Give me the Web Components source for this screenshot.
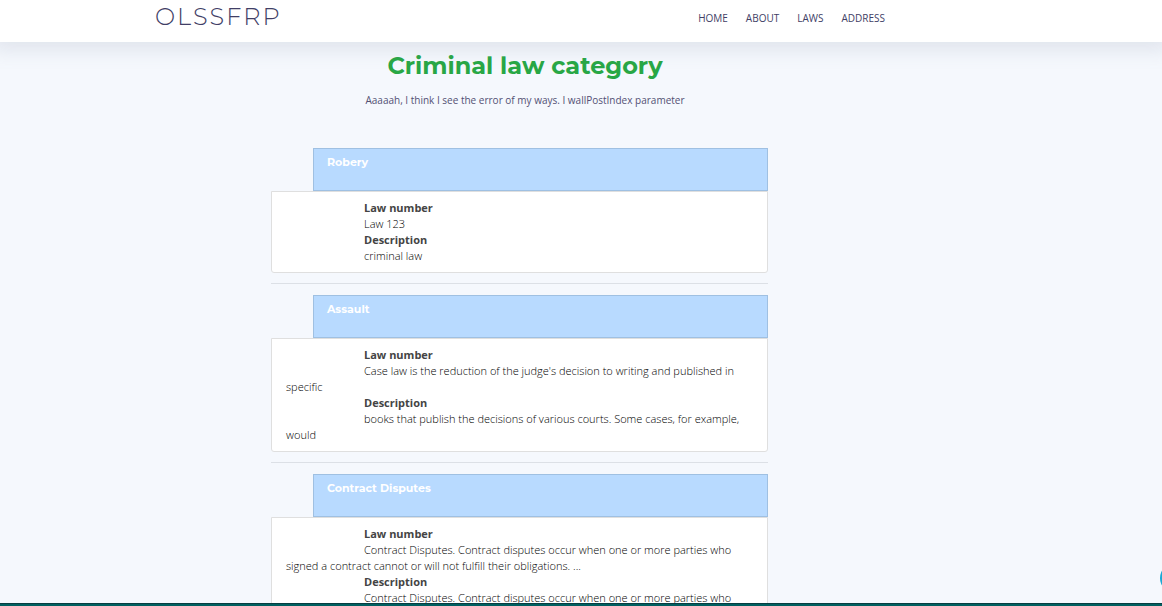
<!DOCTYPE html>
<html lang="en">
<head>
<meta charset="utf-8">
<title>Criminal law category</title>
<style>
  html, body { height: 100%; }
  body {
    margin: 0;
    overflow: hidden;
    background: #f5f8fd;
    color: #444;
    font: 11px/16px "Open Sans", sans-serif;
    --display: Montserrat, "Noto Sans", sans-serif;
    --gutter: 155px;
    --measure: 740px;
  }
</style>
</head>
<body>
<law-app></law-app>

<script>
const define = (name, html) => {
  const template = document.createElement('template');
  template.innerHTML = html;
  customElements.define(name, class extends HTMLElement {
    constructor() {
      super();
      this.attachShadow({ mode: 'open' }).append(template.content.cloneNode(true));
    }
  });
};

define('site-header', `
  <style>
    :host { display: block; position: relative; background: #fff; box-shadow: 0 0 20px 8px rgba(127, 137, 161, .18); }
    header { display: flex; align-items: flex-start; justify-content: space-between; box-sizing: border-box;
      height: 42px; max-width: var(--measure); margin-left: var(--gutter); padding-right: 10px; }
    .logo { color: #413e66; font: 300 24px/34px Montserrat, Lato, sans-serif; letter-spacing: 2px; text-decoration: none; }
    nav { display: flex; gap: 18px; padding-top: 10px; }
  </style>
  <header>
    <a class="logo" href="#home">OLSSFRP</a>
    <nav><slot></slot></nav>
  </header>
`);

customElements.define('nav-link', class extends HTMLElement {
  constructor() {
    super();
    this.attachShadow({ mode: 'open' }).innerHTML = `
      <style>
        :host { display: block; }
        a { color: #413e66; font-size: 10px; line-height: 16px; text-decoration: none; text-transform: uppercase; }
      </style>
      <a><slot></slot></a>`;
  }
  connectedCallback() {
    this.shadowRoot.querySelector('a').href = this.getAttribute('to');
  }
});

define('page-intro', `
  <style>
    :host { display: block; text-align: center; }
    h1 { margin: 0; padding: 8px 0 10px; color: #28a745; font: 700 24px/32px var(--display); }
    p { margin: 0; color: #535074; font-size: 10px; line-height: 16px; }
  </style>
  <h1><slot name="title"></slot></h1>
  <p><slot></slot></p>
`);

define('law-card', `
  <style>
    :host { display: block; }
    h2 { box-sizing: border-box; height: 43px; margin: 0 0 0 42px; padding: 5px 13px; border: 1px solid #9fc0e2;
      background: #b8daff; color: #fff; font: 700 11px/16px var(--display); }
    .body { padding: 8px 13px 8px 14px; border: 1px solid #dfdfdf; border-radius: 0 0 3px 3px; background: #fff; }
    dl, dt, dd { margin: 0; }
    dt, dd { text-indent: 78px; }
    dt { font-weight: 700; }
    dd { color: #000; font-weight: 300; }
    hr { height: 1px; margin: 10px 0 11px; border: 0; background: #dce0e6; }
  </style>
  <article>
    <h2><slot name="title"></slot></h2>
    <div class="body">
      <dl>
        <dt>Law number</dt>
        <dd><slot name="number"></slot></dd>
        <dt>Description</dt>
        <dd><slot name="description"></slot></dd>
      </dl>
    </div>
  </article>
  <hr>
`);

define('chat-bubble', `
  <style>
    :host { position: fixed; right: -28px; bottom: 13px; }
    button { display: block; width: 30px; height: 30px; padding: 0; border: 0; border-radius: 50%; background: #1ba9d5; }
  </style>
  <button type="button" aria-label="Open chat"></button>
`);

define('bottom-bar', `
  <style>
    :host { position: fixed; inset: auto 0 0; box-sizing: border-box; height: 3px; border-top: 1px solid #063e42; background: #005f60; }
  </style>
`);

define('law-app', `
  <style>
    :host { display: block; }
    main { max-width: var(--measure); margin-left: var(--gutter); }
    section { max-width: 497px; margin: 40px 0 0 116px; }
  </style>
  <site-header>
    <nav-link to="#home">Home</nav-link>
    <nav-link to="#about">About</nav-link>
    <nav-link to="#laws">Laws</nav-link>
    <nav-link to="#address">Address</nav-link>
  </site-header>
  <main>
    <page-intro>
      <span slot="title">Criminal law category</span>
      Aaaaah, I think I see the error of my ways. I wallPostIndex parameter
    </page-intro>
    <section>
      <law-card>
        <span slot="title">Robery</span>
        <span slot="number">Law 123</span>
        <span slot="description">criminal law</span>
      </law-card>
      <law-card>
        <span slot="title">Assault</span>
        <span slot="number">Case law is the reduction of the judge's decision to writing and published in specific</span>
        <span slot="description">books that publish the decisions of various courts. Some cases, for example, would</span>
      </law-card>
      <law-card>
        <span slot="title">Contract Disputes</span>
        <span slot="number">Contract Disputes. Contract disputes occur when one or more parties who signed a contract cannot or will not fulfill their obligations. ...</span>
        <span slot="description">Contract Disputes. Contract disputes occur when one or more parties who</span>
      </law-card>
    </section>
  </main>
  <chat-bubble></chat-bubble>
  <bottom-bar></bottom-bar>
`);
</script>
</body>
</html>
